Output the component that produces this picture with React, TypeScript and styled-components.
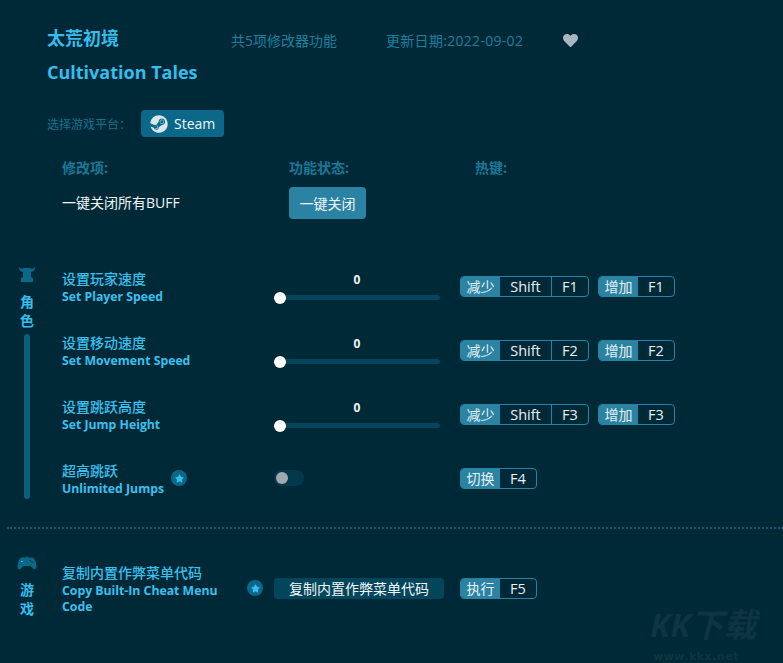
import React from "react";
import styled, { createGlobalStyle } from "styled-components";
import { FaSteam, FaHeart, FaStar } from "react-icons/fa";

const GlobalStyle = createGlobalStyle`
  html, body {
    margin: 0;
    padding: 0;
    background: #002937;
  }
  body {
    font-family: "Open Sans", "Noto Sans CJK SC", sans-serif;
  }
`;

const Page = styled.div`
  position: relative;
  width: 783px;
  height: 663px;
  overflow: hidden;
  background: #002937;
`;

const Header = styled.header`
  padding: 26px 0 0 47px;
`;

const TitleRow = styled.div`
  display: flex;
  align-items: center;
  height: 24px;
`;

const Title = styled.h1`
  margin: 0;
  width: 184px;
  font-size: 18px;
  font-weight: 700;
  line-height: 24px;
  color: #36bdec;
`;

const Stat = styled.span<{ $w: number; $track?: number }>`
  width: ${(p) => p.$w}px;
  margin-top: 3px;
  font-size: 14px;
  letter-spacing: ${(p) => p.$track ?? 0}px;
  color: #1f7f9f;
  white-space: nowrap;
`;

const HeartIcon = styled(FaHeart)`
  width: 15px;
  height: 15px;
  margin: 4px 0 0 -1px;
  color: #a9b6c1;
`;

const EnglishTitle = styled.h2`
  margin: 10px 0 0;
  font-size: 18px;
  font-weight: 700;
  line-height: 24px;
  color: #36bdec;
`;

const PlatformRow = styled.div`
  display: flex;
  align-items: center;
  margin-top: 26px;
`;

const PlatformLabel = styled.span`
  width: 94px;
  font-size: 12px;
  color: #1a7190;
`;

const PlatformButton = styled.div`
  display: flex;
  align-items: center;
  gap: 6px;
  width: 83px;
  height: 27px;
  box-sizing: border-box;
  padding-left: 9px;
  border-radius: 4px;
  background: #0b6888;
  font-size: 14px;
  color: #f2f6f8;
`;

const SteamIcon = styled(FaSteam)`
  width: 18px;
  height: 18px;
  color: #dbe6ec;
`;

const MasterGrid = styled.div`
  display: grid;
  grid-template-columns: 227px 186px 1fr;
  align-items: center;
  padding: 21px 0 0 62px;
  row-gap: 9px;
`;

const ColumnHead = styled.div`
  font-size: 14px;
  font-weight: 700;
  line-height: 20px;
  color: #1b7896;
`;

const MasterLabel = styled.div`
  padding-bottom: 2px;
  font-size: 14px;
  color: #f2f6f8;
`;

const MasterButton = styled.button`
  width: 77px;
  height: 32px;
  padding: 0;
  border: none;
  border-radius: 4px;
  background: #2a83a2;
  font: inherit;
  font-size: 14px;
  color: #f2f6f8;
`;

const Section = styled.section<{ $top: number }>`
  display: flex;
  margin-top: ${(p) => p.$top}px;
`;

const Side = styled.aside<{ $pad: number }>`
  display: flex;
  flex-direction: column;
  align-items: center;
  width: 54px;
  flex: none;
  padding-top: ${(p) => p.$pad}px;
`;

const SideText = styled.div<{ $gap: number }>`
  width: 14px;
  margin-top: ${(p) => p.$gap}px;
  font-size: 14px;
  font-weight: 700;
  line-height: 19px;
  text-align: center;
  color: #36bdec;
`;

const SideBar = styled.div`
  width: 6px;
  height: 165px;
  margin-top: 4px;
  border-radius: 3px;
  background: #0b5f7d;
`;

const Rows = styled.div`
  flex: 1;
  padding-left: 8px;
`;

const Row = styled.div`
  display: flex;
  align-items: center;
  height: 64px;
`;

const Names = styled.div`
  width: 212px;
  flex: none;
  display: flex;
  align-items: center;
`;

const NameText = styled.div`
  max-width: 178px;
  padding-top: 3px;
`;

const NameCn = styled.div`
  margin-bottom: 1px;
  font-size: 14px;
  font-weight: 500;
  line-height: 18px;
  color: #3bc0ee;
`;

const NameEn = styled.div`
  font-size: 12.25px;
  font-weight: 700;
  line-height: 16px;
  color: #3bc0ee;
`;

const StarBadge = styled.span`
  display: flex;
  align-items: center;
  justify-content: center;
  width: 16px;
  height: 16px;
  margin-left: 7px;
  border-radius: 50%;
  background: #0b6888;
  color: #36bdec;
  font-size: 9px;
`;

const Control = styled.div`
  width: 186px;
  flex: none;
`;

const Slider = styled.div`
  position: relative;
  width: 166px;
  text-align: center;
`;

const SliderValue = styled.div`
  font-size: 12px;
  font-weight: 700;
  line-height: 16px;
  color: #f2f6f8;
  margin-bottom: 7px;
`;

const SliderTrack = styled.div`
  position: relative;
  height: 5px;
  border-radius: 3px;
  background: #03465c;
`;

const SliderThumb = styled.span`
  position: absolute;
  left: 0;
  top: -3.5px;
  width: 12px;
  height: 12px;
  border-radius: 50%;
  background: #fff;
`;

const Toggle = styled.div`
  position: relative;
  width: 30px;
  height: 16px;
  border-radius: 8px;
  background: #03394c;
`;

const ToggleKnob = styled.span`
  position: absolute;
  left: 2px;
  top: 2px;
  width: 12px;
  height: 12px;
  border-radius: 50%;
  background: #a2a9ae;
`;

const ActionButton = styled.button`
  width: 170px;
  height: 21px;
  padding: 0;
  border: none;
  border-radius: 4px;
  background: #03465c;
  font: inherit;
  font-size: 14px;
  color: #f2f6f8;
`;

const Keys = styled.div`
  display: flex;
  gap: 9px;
`;

const KeyGroup = styled.div`
  display: flex;
  height: 21px;
  box-sizing: border-box;
  border: 1px solid #2a83a2;
  border-radius: 4px;
  overflow: hidden;
  font-size: 14.5px;
  line-height: 19px;
  color: #eaf0f3;
`;

const KeyLabel = styled.span`
  width: 39px;
  background: #2a83a2;
  text-align: center;
  font-size: 14px;
`;

const KeyCap = styled.span<{ $w: number }>`
  width: ${(p) => p.$w}px;
  text-align: center;
  & + & {
    border-left: 1px solid #2a83a2;
  }
`;

const Divider = styled.hr`
  margin: 17px 0 0 7px;
  border: none;
  border-top: 2px dotted #0e5a75;
`;

const Watermark = styled.div`
  position: absolute;
  left: 650px;
  bottom: 0;
  color: #0e3541;
  font-weight: 700;
`;

const WatermarkLogo = styled.div`
  margin-bottom: 7px;
  font-size: 33px;
  font-style: italic;
  line-height: 36px;
  white-space: nowrap;
`;

const WatermarkUrl = styled.div`
  padding-left: 3px;
  font-family: "DejaVu Sans", sans-serif;
  font-size: 11px;
  line-height: 13px;
  letter-spacing: 0.5px;
`;

const IconSlot = styled.svg`
  flex: none;
`;

function HelmetIcon() {
  return (
    <IconSlot width="16" height="16" viewBox="0 0 16 16" fill="#0b6888">
      <path d="M0 0c.3 1.600 1.300 2.600 3 3 .6-.7 1.500-1 2.500-1h5c1 0 1.900.3 2.500 1 1.700-.4 2.700-1.400 3-3 .5 3-.8 5.500-4 6v5l2 1.200V16H2v-3.800L4 11V6C.8 5.500-.5 3 0 0z" />
    </IconSlot>
  );
}

function GamepadIcon() {
  return (
    <IconSlot width="20" height="14" viewBox="0 0 20 14">
      <path
        d="M9.500 0h1v1.500h4c2.400 0 3.300 1.800 4 4.100.7 2.400 1.300 4.900.8 6.500-.5 1.600-2.200 1.600-3.400.5L13.500 10h-7l-2.400 2.600c-1.200 1.100-2.900 1.100-3.400-.5-.5-1.600.1-4.100.8-6.500.7-2.300 1.600-4.100 4-4.100h4z"
        fill="#0b6888"
      />
      <rect x="4" y="5" width="2" height="1" fill="#36bdec" />
      <circle cx="13.500" cy="4.500" r=".8" fill="#00384c" />
      <circle cx="15" cy="6" r=".8" fill="#00384c" />
    </IconSlot>
  );
}

type KeySet = { label: string; keys: string[] };

function KeyBinding({ label, keys }: KeySet) {
  return (
    <KeyGroup>
      <KeyLabel>{label}</KeyLabel>
      {keys.map((k) => (
        <KeyCap key={k} $w={k === "Shift" ? 51 : 36}>
          {k}
        </KeyCap>
      ))}
    </KeyGroup>
  );
}

function SliderControl() {
  return (
    <Slider>
      <SliderValue>0</SliderValue>
      <SliderTrack>
        <SliderThumb />
      </SliderTrack>
    </Slider>
  );
}

const speedRows = [
  { cn: "设置玩家速度", en: "Set Player Speed", key: "F1" },
  { cn: "设置移动速度", en: "Set Movement Speed", key: "F2" },
  { cn: "设置跳跃高度", en: "Set Jump Height", key: "F3" },
];

export default function App() {
  return (
    <Page>
      <GlobalStyle />
      <Header>
        <TitleRow>
          <Title>太荒初境</Title>
          <Stat $w={155}>共5项修改器功能</Stat>
          <Stat $w={178} $track={0.3}>
            更新日期:2022-09-02
          </Stat>
          <HeartIcon />
        </TitleRow>
        <EnglishTitle>Cultivation Tales</EnglishTitle>
        <PlatformRow>
          <PlatformLabel>选择游戏平台：</PlatformLabel>
          <PlatformButton>
            <SteamIcon />
            Steam
          </PlatformButton>
        </PlatformRow>
      </Header>

      <MasterGrid>
        <ColumnHead>修改项:</ColumnHead>
        <ColumnHead>功能状态:</ColumnHead>
        <ColumnHead>热键:</ColumnHead>
        <MasterLabel>一键关闭所有BUFF</MasterLabel>
        <MasterButton>一键关闭</MasterButton>
        <div />
      </MasterGrid>

      <Section $top={35}>
        <Side $pad={12}>
          <HelmetIcon />
          <SideText $gap={10}>角色</SideText>
          <SideBar />
        </Side>
        <Rows>
          {speedRows.map((row) => (
            <Row key={row.key}>
              <Names>
                <NameText>
                  <NameCn>{row.cn}</NameCn>
                  <NameEn>{row.en}</NameEn>
                </NameText>
              </Names>
              <Control>
                <SliderControl />
              </Control>
              <Keys>
                <KeyBinding label="减少" keys={["Shift", row.key]} />
                <KeyBinding label="增加" keys={[row.key]} />
              </Keys>
            </Row>
          ))}
          <Row>
            <Names>
              <NameText>
                <NameCn>超高跳跃</NameCn>
                <NameEn>Unlimited Jumps</NameEn>
              </NameText>
              <StarBadge>
                <FaStar />
              </StarBadge>
            </Names>
            <Control>
              <Toggle>
                <ToggleKnob />
              </Toggle>
            </Control>
            <Keys>
              <KeyBinding label="切换" keys={["F4"]} />
            </Keys>
          </Row>
        </Rows>
      </Section>

      <Divider />

      <Section $top={27}>
        <Side $pad={0}>
          <GamepadIcon />
          <SideText $gap={10}>游戏</SideText>
        </Side>
        <Rows>
          <Row>
            <Names>
              <NameText>
                <NameCn>复制内置作弊菜单代码</NameCn>
                <NameEn>Copy Built-In Cheat Menu Code</NameEn>
              </NameText>
              <StarBadge>
                <FaStar />
              </StarBadge>
            </Names>
            <Control>
              <ActionButton>复制内置作弊菜单代码</ActionButton>
            </Control>
            <Keys>
              <KeyBinding label="执行" keys={["F5"]} />
            </Keys>
          </Row>
        </Rows>
      </Section>

      <Watermark>
        <WatermarkLogo>KK下载</WatermarkLogo>
        <WatermarkUrl>www.kkx.net</WatermarkUrl>
      </Watermark>
    </Page>
  );
}
